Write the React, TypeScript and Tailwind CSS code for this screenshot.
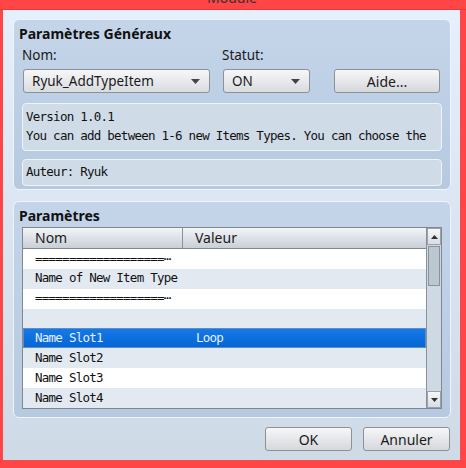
const ui = "font-['Noto_Sans',sans-serif]";
const mono = "font-['DejaVu_Sans_Mono',monospace] text-[12.5px] tracking-[-0.75px]";

const rows = [
  { name: '===================⋯', value: '' },
  { name: 'Name of New Item Type', value: '' },
  { name: '===================⋯', value: '' },
  { name: '', value: '' },
  { name: 'Name Slot1', value: 'Loop', selected: true },
  { name: 'Name Slot2', value: '' },
  { name: 'Name Slot3', value: '' },
  { name: 'Name Slot4', value: '' },
];

function Caret() {
  return (
    <svg width="9" height="5" viewBox="0 0 9 5" className="shrink-0">
      <path d="M0 0h9L4.5 5z" fill="#444" />
    </svg>
  );
}

function Combo({ label, w }: { label: string; w: string }) {
  return (
    <div
      className={`${w} flex h-[24px] items-center justify-between rounded-[3px] border border-[#8d9196] bg-gradient-to-b from-[#f6f7f8] to-[#d9dcdf] pl-[8px] pr-[9px] text-[13.5px] text-[#1a1a1a]`}
    >
      <span>{label}</span>
      <Caret />
    </div>
  );
}

function Button({ label, w }: { label: string; w: string }) {
  return (
    <div
      className={`${w} flex h-[24px] items-center justify-center rounded-[3px] border border-[#8d9196] bg-gradient-to-b from-[#f6f7f8] to-[#d5d8dc] text-[14px] text-[#1a1a1a]`}
    >
      {label}
    </div>
  );
}

function ScrollArrow({ up }: { up?: boolean }) {
  return (
    <div className="flex h-[17px] items-center justify-center border border-[#9aa3ad] bg-gradient-to-b from-[#f5f7f9] to-[#d9dee4]">
      <svg width="7" height="4" viewBox="0 0 7 4">
        <path d={up ? 'M0 4h7L3.5 0z' : 'M0 0h7L3.5 4z'} fill="#333" />
      </svg>
    </div>
  );
}

export default function App() {
  return (
    <div className={`${ui} flex h-[468px] w-[466px] flex-col bg-[#ff4545]`}>
      <div className="relative h-[10px] overflow-hidden border-b border-[#e23a3a]">
        <span className="absolute left-[207px] top-[-13px] text-[14px] text-[#333]">Module</span>
      </div>

      <div className="ml-[3px] mr-[6px] mb-[8px] flex flex-1 flex-col bg-gradient-to-b from-[#e6effc] to-[#cfdae7] pl-[10px] pr-[9px] pt-[9px]">
        {/* Paramètres Généraux */}
        <div className="flex h-[171px] flex-col rounded-[6px] border border-[#eef4fb] bg-gradient-to-b from-[#c4d5ea] to-[#b6c9de] px-[8px]">
          <div className="pt-[5px] text-[14px] font-bold leading-[17px] text-[#111]">
            <span className="-ml-[3px]">Paramètres Généraux</span>
          </div>
          <div className="mt-[5px] flex">
            <div className="flex w-[200px] flex-col">
              <span className="text-[13.5px] leading-[17px] text-[#1a1a1a]">Nom:</span>
              <div className="ml-[1px] mt-[5px]">
                <Combo label="Ryuk_AddTypeItem" w="w-[187px]" />
              </div>
            </div>
            <div className="flex w-[112px] flex-col">
              <span className="text-[13.5px] leading-[17px] text-[#1a1a1a]">Statut:</span>
              <div className="ml-[1px] mt-[5px]">
                <Combo label="ON" w="w-[87px]" />
              </div>
            </div>
            <div className="mt-[22px]">
              <Button label="Aide..." w="w-[106px]" />
            </div>
          </div>
          <div className={`${mono} mt-[10px] flex h-[48px] flex-col justify-center rounded-[4px] border border-[#eef3f8] bg-[#cfdbe7] pb-[2px] pl-[3px] leading-[19px] text-[#111]`}>
            <span>Version 1.0.1</span>
            <span className="whitespace-nowrap">You can add between 1-6 new Items Types. You can choose the</span>
          </div>
          <div className={`${mono} mt-[8px] flex h-[27px] items-center rounded-[4px] border border-[#eef3f8] bg-[#cfdbe7] pl-[3px] text-[#111]`}>
            Auteur: Ryuk
          </div>
        </div>

        {/* Paramètres */}
        <div className="mt-[11px] flex h-[217px] flex-col rounded-[6px] border border-[#eef4fb] bg-gradient-to-b from-[#c4d5ea] to-[#b6c9de] px-[8px]">
          <div className="pt-[5px] text-[14px] font-bold leading-[17px] text-[#111]">
            <span className="-ml-[3px]">Paramètres</span>
          </div>
          <div className="mt-[3px] flex h-[182px] border border-[#7f878f] bg-white">
            <div className="flex flex-1 flex-col">
              <div className="flex h-[21px] border-b border-[#7f878f] bg-gradient-to-b from-[#f3f5f7] to-[#c9cfd6] text-[14px] leading-[20px] text-[#1a1a1a]">
                <div className="w-[160px] border-r border-[#8a9098] pl-[12px]">Nom</div>
                <div className="pl-[12px]">Valeur</div>
              </div>
              {rows.map((r, i) =>
                r.selected ? (
                  <div
                    key={i}
                    className={`${mono} flex h-[20px] items-center border border-[#5b8ec6] bg-gradient-to-b from-[#1579e6] to-[#0566d6] text-[#e8f1ff]`}
                  >
                    <span className="w-[159px] pl-[11px]">{r.name}</span>
                    <span className="pl-[13px]">{r.value}</span>
                  </div>
                ) : (
                  <div
                    key={i}
                    className={`${mono} flex h-[20px] items-center text-[#111] ${i % 2 === 0 ? 'bg-white' : 'bg-[#e3e9f1]'}`}
                  >
                    <span className="w-[160px] whitespace-nowrap pl-[12px]">{r.name}</span>
                    <span className="pl-[13px]">{r.value}</span>
                  </div>
                ),
              )}
            </div>
            <div className="flex w-[15px] flex-col border-l border-[#8a9098] bg-[#cfd9e4]">
              <ScrollArrow up />
              <div className="mx-[1px] mt-[1px] h-[40px] border border-[#8a929b] bg-[#bcc7d2]" />
              <div className="flex-1" />
              <ScrollArrow />
            </div>
          </div>
        </div>

        <div className="mt-[9px] flex justify-end gap-[11px] pr-[1px]">
          <Button label="OK" w="w-[87px]" />
          <Button label="Annuler" w="w-[87px]" />
        </div>
      </div>
    </div>
  );
}
